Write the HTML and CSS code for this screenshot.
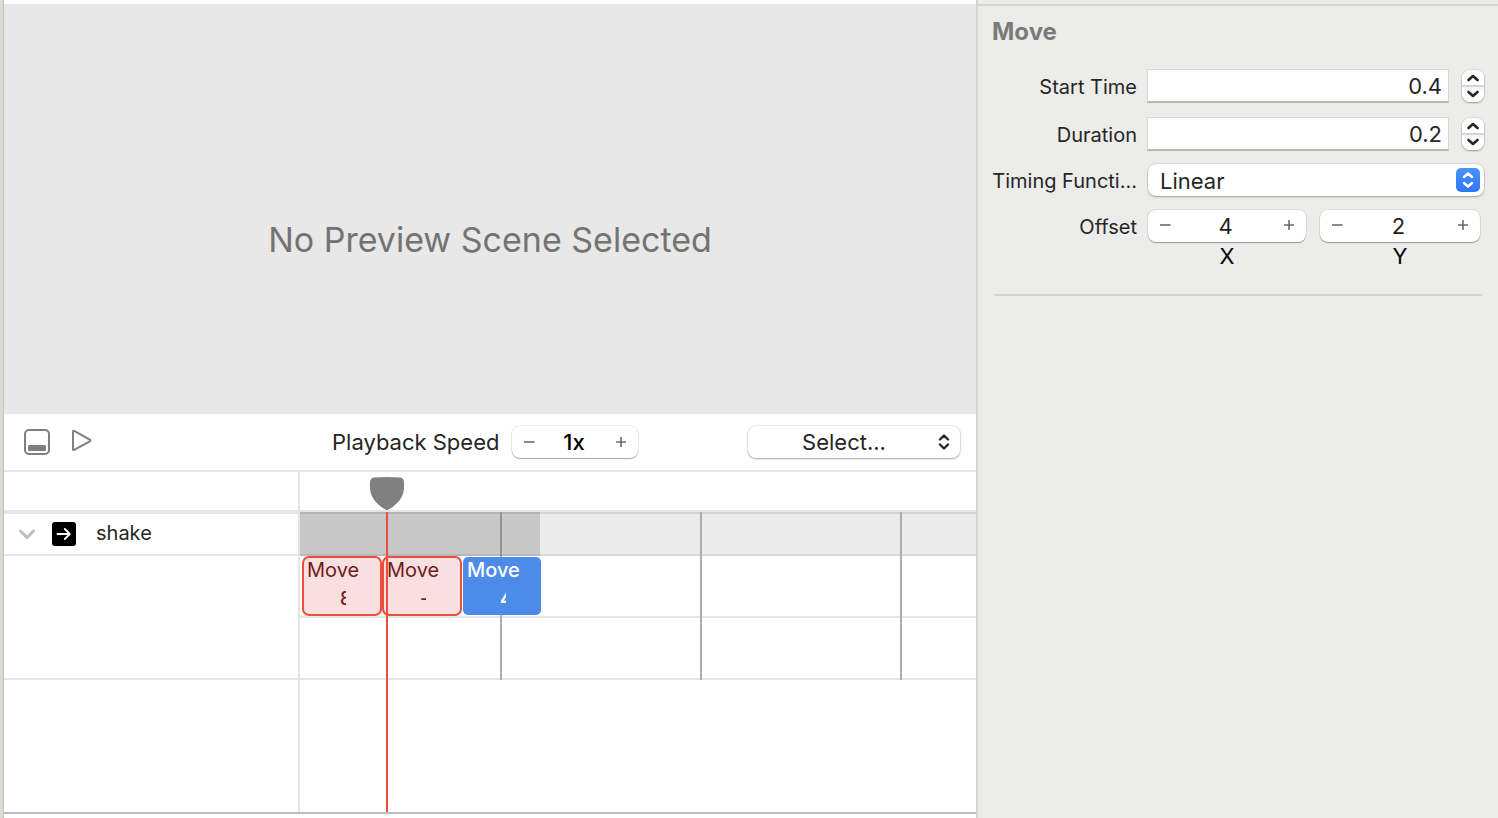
FILE: index.html
```html
<!DOCTYPE html>
<html lang="en">
<head>
<meta charset="utf-8">
<title>Action Editor</title>
<link rel="stylesheet" href="styles.css">
</head>
<body>
<div class="app">
  <div class="edge"></div>
  <main class="editor">
    <section class="preview">No Preview Scene Selected</section>

    <div class="toolbar">
      <div class="tools">
        <button class="tool" type="button" aria-label="Toggle preview">
          <svg width="26" height="26" viewBox="0 0 26 26"><rect x="1" y="1" width="24" height="24" rx="4" fill="none" stroke="#7f7f7f" stroke-width="2"/><rect x="4" y="16" width="18" height="6" rx="1.5" fill="#7f7f7f"/></svg>
        </button>
        <button class="tool" type="button" aria-label="Play">
          <svg width="20" height="26" viewBox="0 0 20 26"><path d="M1 2.500V20.200Q1 21.500 2.200 20.800L17.800 12.300Q19 11.500 17.800 10.700L2.200 1.900Q1 1.200 1 2.500Z" fill="none" stroke="#7f7f7f" stroke-width="2" stroke-linejoin="round"/></svg>
        </button>
      </div>
      <div class="speed">
        <label for="speed">Playback Speed</label>
        <div class="stepper stepper-speed">
          <button type="button" aria-label="Slower"><svg width="12" height="12" viewBox="0 0 12 12"><path d="M1 6H11.500"/></svg></button>
          <input id="speed" value="1x">
          <button type="button" aria-label="Faster"><svg width="12" height="12" viewBox="0 0 12 12"><path d="M1 6H11M6 1V11"/></svg></button>
        </div>
      </div>
      <div class="popup popup-scene">
        <select aria-label="Preview scene"><option>Select...</option></select>
        <svg class="updown" width="12" height="16" viewBox="0 0 12 16"><path d="M2 5.500L6 1.500L10 5.500M2 10.500L6 14.500L10 10.500"/></svg>
      </div>
    </div>

    <section class="timeline">
      <div class="names">
        <div class="ruler"></div>
        <div class="name">
          <button class="disclosure" type="button" aria-label="Collapse shake"><svg width="18" height="12" viewBox="0 0 18 12"><path d="M2.500 3L9 9.500L15.500 3" fill="none" stroke="#bdbdbd" stroke-width="3" stroke-linecap="round" stroke-linejoin="round"/></svg></button>
          <svg class="badge" width="24" height="24" viewBox="0 0 24 24"><rect width="24" height="24" rx="3" fill="#000"/><path d="M5.500 12H17.500M12.800 7L17.800 12L12.800 17" fill="none" stroke="#fff" stroke-width="1.800" stroke-linecap="round" stroke-linejoin="round"/></svg>
          <span>shake</span>
        </div>
        <div class="name-rest"></div>
      </div>
      <div class="lanes">
        <div class="ruler"></div>
        <div class="lane-head"></div>
        <div class="lane lane-clips"></div>
        <div class="lane"></div>
        <div class="ticks"></div>
        <div class="summary" style="width:240px"></div>
        <div class="clips">
          <button class="clip" type="button" style="width:80px"><span>Move</span><span class="value">8</span></button>
          <button class="clip" type="button" style="width:80px"><span>Move</span><span class="value">-</span></button>
          <button class="clip selected" type="button" style="width:78px"><span>Move</span><span class="value">4</span></button>
        </div>
        <div class="playhead">
          <svg width="34" height="34" viewBox="0 0 34 34"><path d="M4 0.500Q17 -0.500 30 0.500Q34 1 34 5.500V11C34 20 27 28 18.500 32.500Q17 33.500 15.500 32.500C7 28 0 20 0 11V5.500Q0 1 4 0.500Z" fill="#808080"/></svg>
          <div class="needle"></div>
        </div>
      </div>
    </section>
    <div class="footer"></div>
  </main>

  <aside class="inspector">
    <h2>Move</h2>
    <form class="fields">
      <label class="number-label" for="start">Start Time</label>
      <div class="number">
        <input id="start" value="0.4">
        <div class="spin">
          <button type="button" aria-label="Increase start time"><svg width="12" height="8" viewBox="0 0 12 8"><path d="M1.500 6L6 2L10.500 6"/></svg></button>
          <button type="button" aria-label="Decrease start time"><svg width="12" height="8" viewBox="0 0 12 8"><path d="M1.500 2L6 6L10.500 2"/></svg></button>
        </div>
      </div>
      <label class="number-label" for="duration">Duration</label>
      <div class="number">
        <input id="duration" value="0.2">
        <div class="spin">
          <button type="button" aria-label="Increase duration"><svg width="12" height="8" viewBox="0 0 12 8"><path d="M1.500 6L6 2L10.500 6"/></svg></button>
          <button type="button" aria-label="Decrease duration"><svg width="12" height="8" viewBox="0 0 12 8"><path d="M1.500 2L6 6L10.500 2"/></svg></button>
        </div>
      </div>
      <label for="timing">Timing Functi...</label>
      <div class="popup popup-timing">
        <select id="timing"><option>Linear</option></select>
        <span class="cap"><svg class="updown" width="12" height="16" viewBox="0 0 12 16"><path d="M2 5L6 1.500L10 5M2 11L6 14.500L10 11"/></svg></span>
      </div>
      <label for="offset-x">Offset</label>
      <div class="pair">
        <div class="axis">
          <div class="stepper">
            <button type="button" aria-label="Decrease X"><svg width="12" height="12" viewBox="0 0 12 12"><path d="M1 5H11.500"/></svg></button>
            <input id="offset-x" value="4">
            <button type="button" aria-label="Increase X"><svg width="12" height="12" viewBox="0 0 12 12"><path d="M1 5H11M6 0V10"/></svg></button>
          </div>
          <label for="offset-x">X</label>
        </div>
        <div class="axis">
          <div class="stepper">
            <button type="button" aria-label="Decrease Y"><svg width="12" height="12" viewBox="0 0 12 12"><path d="M1 5H11.500"/></svg></button>
            <input id="offset-y" value="2">
            <button type="button" aria-label="Increase Y"><svg width="12" height="12" viewBox="0 0 12 12"><path d="M1 5H11M6 0V10"/></svg></button>
          </div>
          <label for="offset-y">Y</label>
        </div>
      </div>
    </form>
    <hr>
  </aside>
</div>
</body>
</html>
```
FILE: styles.css
```css
* { box-sizing: border-box; }

body {
  margin: 0;
  background: #fff;
  color: #262626;
  font-family: Inter, "Liberation Sans", sans-serif;
  font-size: 20px;
}

button, input, select {
  margin: 0;
  padding: 0;
  border: 0;
  background: none;
  color: inherit;
  font: inherit;
  appearance: none;
  outline: 0;
}

svg { display: block; }

.app {
  display: grid;
  grid-template-columns: 4px minmax(0, 1fr) 522px;
  min-height: 100vh;
}

.edge { background: linear-gradient(to right, #dddbd8 0 2px, #d2d0cd 3px, #bfbdba); }

.editor {
  display: flex;
  flex-direction: column;
  border-top: 4px solid #fff;
}

.preview {
  display: flex;
  align-items: center;
  justify-content: center;
  height: 410px;
  padding-top: 60px;
  background: #e8e8e8;
  color: #737373;
  font-size: 34px;
}

/* Toolbar */
.toolbar {
  display: flex;
  align-items: center;
  height: 58px;
  padding: 0 16px 0 20px;
  border-bottom: 2px solid #e5e5e5;
}

.tools { display: flex; gap: 22px; width: 308px; }

.speed { display: flex; align-items: center; gap: 13px; flex: 1; font-size: 22px; }

.stepper {
  display: flex;
  align-items: center;
  height: 32px;
  border-radius: 8px;
  background: #fff;
  box-shadow: 0 0 0 1px rgba(0, 0, 0, .07), 0 1px 1px rgba(0, 0, 0, .3);
  color: #1f1f1f;
  font-size: 22px;
}

.stepper button { display: grid; place-items: center; flex: none; width: 34px; height: 32px; }
.stepper svg { fill: none; stroke: #6b6b6b; stroke-width: 1.6; }
.stepper input { flex: 1; width: 0; min-width: 0; padding-right: 3px; text-align: center; }

.stepper-speed { width: 126px; color: #000; font-weight: 500; }

.popup {
  position: relative;
  height: 32px;
  border-radius: 8px;
  background: #fff;
  box-shadow: 0 0 1px 1px rgba(0, 0, 0, .07), 0 1px 2px rgba(0, 0, 0, .3);
  font-size: 22px;
}

.popup select { display: block; width: 100%; height: 32px; padding: 0 12px; }
.updown { fill: none; stroke: #262626; stroke-width: 2.4; stroke-linecap: round; stroke-linejoin: round; }

.popup-scene { width: 212px; }
.popup-scene select { padding-right: 32px; text-align: center; text-align-last: center; }
.popup-scene .updown { position: absolute; top: 8px; right: 10px; pointer-events: none; }

/* Timeline */
.timeline { display: grid; grid-template-columns: 296px minmax(0, 1fr); flex: 1; }

.names { border-right: 2px solid #e5e5e5; }
.ruler { height: 40px; border-bottom: 2px solid #e5e5e5; }

.name {
  display: flex;
  align-items: center;
  height: 44px;
  padding-left: 14px;
  border-top: 2px solid #e5e5e5;
  border-bottom: 2px solid #e5e5e5;
}

.name span { line-height: 24px; padding-bottom: 2px; }

.badge { margin: 0 20px 0 16px; }
.name-rest { height: 124px; border-bottom: 2px solid #e5e5e5; }

.lanes { position: relative; }
.lane-head { height: 44px; border-top: 2px solid #d4d4d4; border-bottom: 2px solid #d9d9d9; background: #ebebeb; }
.lane { height: 62px; border-bottom: 2px solid #e5e5e5; }

.ticks {
  position: absolute;
  top: 40px;
  left: 200px;
  right: 0;
  height: 168px;
  background: repeating-linear-gradient(to right, #adadad 0 2px, transparent 2px 200px);
}

.summary { position: absolute; top: 40px; left: 0; height: 44px; background: rgba(0, 0, 0, .15); }

.clips { position: absolute; top: 84px; left: 2px; display: flex; }

.clip {
  display: flex;
  flex-direction: column;
  height: 60px;
  padding: 0 3px;
  border: 2px solid #eb4e3d;
  border-radius: 7px;
  background: #f9dfdf;
  color: #701c1c;
  line-height: 24px;
  text-align: left;
}

.clip .value { width: 6px; height: 24px; margin: 5px 0 0 33px; overflow: hidden; font-size: 18px; font-weight: 500; }

.clip.selected {
  height: 58px;
  margin: 1px 0 0 1px;
  padding: 1px 4px;
  border: 0;
  border-radius: 5px;
  background: #4c8ce8;
  color: #fff;
  font-weight: 500;
}

.clip.selected .value { font-weight: 700; }

.playhead {
  position: absolute;
  top: 5px;
  bottom: 0;
  left: 70px;
  display: flex;
  flex-direction: column;
  align-items: center;
  pointer-events: none;
}

.needle { flex: 1; width: 2px; margin-top: 1px; background: #eb4e3d; }

.footer { height: 6px; border-top: 2px solid #bdbdbd; }

/* Inspector */
.inspector {
  padding: 4px 14px 0 12px;
  border-left: 2px solid #d5d5d4;
  background: linear-gradient(#d5d5d4, #d5d5d4) 0 4px / 100% 2px no-repeat #ececea;
}

.inspector h2 { margin: 14px 2px 23px; color: #7a7a78; font-size: 24px; font-weight: 700; line-height: 28px; }

.fields {
  display: grid;
  grid-template-columns: 147px minmax(0, 1fr);
  grid-template-rows: 48px 47px 46px auto;
  column-gap: 10px;
  line-height: 34px;
}

.fields > label { overflow: hidden; text-align: right; white-space: nowrap; }
.fields > .number-label { line-height: 36px; }

.number { display: flex; gap: 13px; }

.number input {
  flex: 1;
  min-width: 0;
  height: 34px;
  padding: 0 6px;
  border: 1px solid #d5d5d4;
  border-bottom: 2px solid #b5b5b4;
  background: #fff;
  font-size: 22px;
  text-align: right;
}

.spin {
  display: flex;
  flex-direction: column;
  width: 22px;
  height: 32px;
  margin-top: 1px;
  border-radius: 8px;
  background: linear-gradient(#fff 15px, #d5d5d5 15px 17px, #f5f5f5 17px, #fff 22px);
  box-shadow: 0 0 1px 1px rgba(0, 0, 0, .07), 0 1px 2px rgba(0, 0, 0, .3);
}

.spin button { display: grid; place-items: center; flex: 1; }
.spin svg { fill: none; stroke: #262626; stroke-width: 2.6; stroke-linecap: round; stroke-linejoin: round; }

.popup-timing { margin-left: 1px; }
.popup-timing select { padding-bottom: 2px; }

.cap {
  position: absolute;
  top: 4px;
  right: 4px;
  display: grid;
  place-items: center;
  width: 24px;
  height: 24px;
  border-radius: 5px;
  background: linear-gradient(#4a93f8, #2f76f6);
  pointer-events: none;
}

.cap .updown { stroke: #fff; stroke-width: 2.4; }

.pair { display: grid; grid-template-columns: 158px minmax(0, 1fr); gap: 14px; padding: 0 4px 0 1px; }

.axis label { display: block; color: #000; font-size: 22px; line-height: 28px; text-align: center; }

.inspector hr { height: 2px; margin: 24px 2px 0 4px; border: 0; background: #d5d5d4; }
```
